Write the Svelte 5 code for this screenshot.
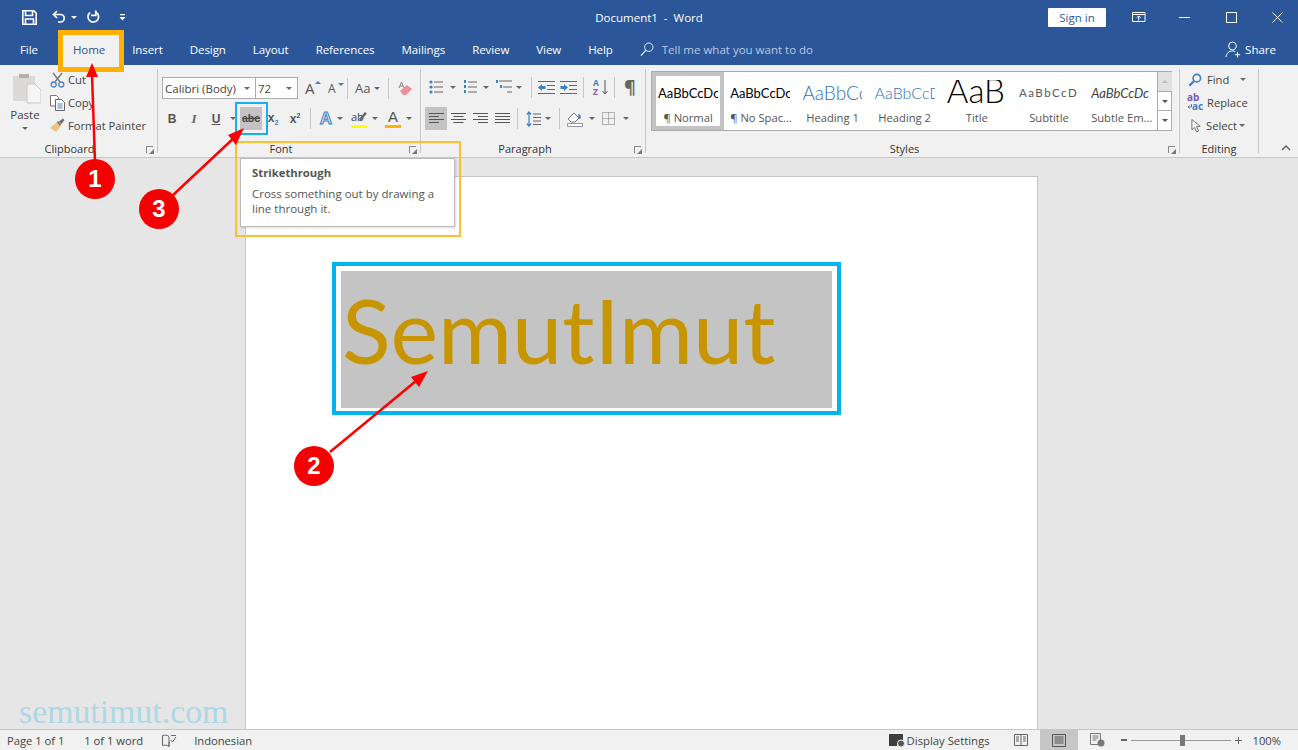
<script lang="ts">
  const tabs = ['Insert', 'Design', 'Layout', 'References', 'Mailings', 'Review', 'View', 'Help'];
  const styles = [
    { cls: 'st-normal', sample: 'AaBbCcDc', name: '¶ Normal', active: true },
    { cls: 'st-normal', sample: 'AaBbCcDc', name: '¶ No Spac...' },
    { cls: 'st-h1', sample: 'AaBbCc', name: 'Heading 1' },
    { cls: 'st-h2', sample: 'AaBbCcD', name: 'Heading 2' },
    { cls: 'st-title', sample: 'AaB', name: 'Title' },
    { cls: 'st-sub', sample: 'AaBbCcD', name: 'Subtitle' },
    { cls: 'st-em', sample: 'AaBbCcDc', name: 'Subtle Em...' }
  ];
  const markers = [
    { n: 1, x: 95, y: 179 },
    { n: 2, x: 314, y: 466 },
    { n: 3, x: 159, y: 209 }
  ];
</script>

<div class="word">
  <header class="titlebar">
    <div class="qat">
      <svg width="15" height="15" viewBox="0 0 15 15"><path d="M.8.8h11l2.400 2.400v11H.8z M3.500 1v4.500h7V1 M3.500 14V9h8v5" fill="none" stroke="#fff" stroke-width="1.600"/></svg>
      <svg class="undo" width="14" height="14" viewBox="0 0 14 14"><path d="M5 1 1.500 4.500 5 8M2 4.500h6.500a3.600 3.600 0 0 1 0 7.500H6" fill="none" stroke="#fff" stroke-width="1.700"/></svg>
      <span class="caret white"></span>
      <svg class="redo" width="14" height="14" viewBox="0 0 14 14"><path d="M9.500 1.900a5.300 5.300 0 1 1-5.400.6M9.800.5v4.800H5" fill="none" stroke="#fff" stroke-width="1.700"/></svg>
      <svg class="custom" width="7" height="8" viewBox="0 0 7 8"><path d="M1 1h5v1.200H1zM0.500 4h6L3.500 7.500z" fill="#fff"/></svg>
    </div>
    <div class="doc-title">Document1&nbsp; -&nbsp; Word</div>
    <div class="win">
      <button class="signin">Sign in</button>
      <svg class="w-disp" width="14" height="12" viewBox="0 0 14 12"><path d="M.5 1.500h12.500v9H.5zM.5 3.500H13M6.700 9.500V5M4.800 6.800l1.900-1.900 1.900 1.900" fill="none" stroke="#fff"/></svg>
      <svg class="w-min" width="11" height="11" viewBox="0 0 11 11"><path d="M0 5.500h11" stroke="#fff"/></svg>
      <svg class="w-max" width="11" height="11" viewBox="0 0 11 11"><path d="M.5.500h10v10H.5z" fill="none" stroke="#fff"/></svg>
      <svg class="w-close" width="11" height="11" viewBox="0 0 11 11"><path d="M.5.500l10 10M10.500.500l-10 10" stroke="#fff"/></svg>
    </div>
  </header>

  <nav class="tabs">
    <span class="tab file">File</span>
    <span class="tab home">Home</span>
    {#each tabs as t}
      <span class="tab">{t}</span>
    {/each}
    <svg class="search" width="14" height="15" viewBox="0 0 14 15"><circle cx="8.800" cy="5.200" r="4.200" fill="none" stroke="#e6ecf5"/><path d="M5.800 8.400 1 13.600" stroke="#e6ecf5" stroke-width="1.300"/></svg>
    <span class="tell">Tell me what you want to do</span>
    <svg class="share-ic" width="17" height="17" viewBox="0 0 17 17"><circle cx="7.500" cy="5" r="3.900" fill="none" stroke="#fff"/><path d="M1 16c.5-4 3-6 6.500-6 1 0 2 .2 2.800.6M12.500 11v5.500M9.800 13.700h5.400" fill="none" stroke="#fff"/></svg>
    <span class="share">Share</span>
  </nav>

  <section class="ribbon">
    <div class="group g-clip">
      <div class="body clip-body">
        <div class="paste">
          <svg width="32" height="31" viewBox="0 0 32 31">
            <path d="M4 3h22v25H4z" fill="#dcd9d9"/>
            <path d="M10 1h10v4H10z" fill="#b3b0b0"/>
            <path d="M18 11h8l6 6v13H18z" fill="#f6f4f4" stroke="#c9c6c6"/>
          </svg>
          <span class="paste-label">Paste</span>
          <span class="caret"></span>
        </div>
        <div class="clip-list">
          <div class="clip-row">
            <svg width="15" height="16" viewBox="0 0 15 16"><path d="M3 1l7 9M12 1 5 10" stroke="#7a7a7a" stroke-width="1.400"/><circle cx="3.700" cy="12.500" r="2.500" fill="none" stroke="#4a86c5" stroke-width="1.300"/><circle cx="11.300" cy="12.500" r="2.500" fill="none" stroke="#4a86c5" stroke-width="1.300"/></svg>
            <span>Cut</span>
          </div>
          <div class="clip-row">
            <svg width="15" height="16" viewBox="0 0 15 16"><path d="M.5.500h6l2 2V11h-8z" fill="#fff" stroke="#777"/><path d="M5.500 4.500h6l3 3v8h-9z" fill="#fff" stroke="#666"/><path d="M7.500 9h5M7.500 11h5M7.500 13h5" stroke="#4a7fb5"/></svg>
            <span>Copy</span>
          </div>
          <div class="clip-row">
            <svg width="15" height="15" viewBox="0 0 15 15"><path d="M0 10 7 4l4 4-5 6z" fill="#e8c48a"/><path d="M7 4l1-1 3 3-1 2zM9 3.500l4-3 1.500 1.500-3 4z" fill="#6f6f6f"/></svg>
            <span>Format Painter</span>
          </div>
        </div>
      </div>
      <div class="label lb-clip">Clipboard<i class="launch"></i></div>
    </div>

    <div class="group g-font">
      <div class="body font-body">
        <div class="row r1">
          <div class="select fname">Calibri (Body)<span class="caret"></span></div>
          <div class="select fsize">72<span class="caret"></span></div>
          <span class="gly grow">A<em class="up"></em></span>
          <span class="gly shrink">A<em class="down"></em></span>
          <b class="sep s1"></b>
          <span class="gly aa">Aa</span><span class="caret c-aa"></span>
          <b class="sep s2"></b>
          <svg class="eraser" width="15" height="15" viewBox="0 0 15 15"><path d="M2 10 9 4l5 4-6 6H5z" fill="#ef8f9c"/><path d="M1 7 3.500 1 6 7M2 5h3" fill="none" stroke="#888"/></svg>
        </div>
        <div class="row r2">
          <span class="fb b">B</span>
          <span class="fb i">I</span>
          <span class="fb u">U</span>
          <span class="caret c-u"></span>
          <span class="strike">abc</span>
          <span class="fb script">x<sub>2</sub></span>
          <span class="fb script sup">x<sup>2</sup></span>
          <b class="sep s3"></b>
          <span class="texteff">A</span><span class="caret"></span>
          <span class="hl">ab<i class="bar yellow"></i><svg class="pen" width="9" height="10" viewBox="0 0 9 10"><path d="M1 8 7 1l2 1.500L3 9.500z" fill="#666"/></svg></span><span class="caret c2"></span>
          <span class="fc">A<i class="bar orange"></i></span><span class="caret c3"></span>
        </div>
      </div>
      <div class="label lb-mid">Font<i class="launch"></i></div>
    </div>

    <div class="group g-para">
      <div class="body para-body">
        <div class="row pr1">
          <svg width="14" height="16" viewBox="0 0 14 16"><g fill="#3f7fc4"><circle cx="2" cy="3" r="1.600"/><circle cx="2" cy="8" r="1.600"/><circle cx="2" cy="13" r="1.600"/></g><path d="M5 3h9M5 8h9M5 13h9" stroke="#666"/></svg>
          <span class="caret m7"></span>
          <svg class="m7" width="14" height="16" viewBox="0 0 14 16"><g fill="#3f7fc4"><rect x="1" y="1" width="2" height="3"/><rect x="1" y="6" width="2" height="3"/><rect x="1" y="11" width="2" height="3"/></g><path d="M5 3h9M5 8h9M5 13h9" stroke="#666"/></svg>
          <span class="caret m6"></span>
          <svg class="m7" width="17" height="16" viewBox="0 0 17 16"><g fill="#3f7fc4"><rect x="0" y="1" width="2" height="3"/><rect x="4" y="6" width="2" height="3"/></g><path d="M3 2h13M7 8h9M11 13h5" stroke="#666"/></svg>
          <span class="caret m3"></span>
          <b class="sep m9"></b>
          <svg class="m6" width="17" height="13" viewBox="0 0 17 13"><path d="M0 .500h17M9 4.500h8M9 8.500h8M0 12.500h17" stroke="#666"/><path d="M0 6.500 4 3v2h3.500v3H4v2z" fill="#3f7fc4"/></svg>
          <svg class="m5" width="17" height="13" viewBox="0 0 17 13"><path d="M0 .500h17M9 4.500h8M9 8.500h8M0 12.500h17" stroke="#666"/><path d="M8 6.500 4 3v2H.500v3H4v2z" fill="#3f7fc4"/></svg>
          <b class="sep m6"></b>
          <span class="sort m9"><em>A</em><em class="z">Z</em><svg width="6" height="15" viewBox="0 0 6 15"><path d="M3 0v14M.5 11 3 14l2.500-3" fill="none" stroke="#555"/></svg></span>
          <b class="sep m6"></b>
          <span class="pil">¶</span>
        </div>
        <div class="row pr2">
          <span class="al on"><svg width="15" height="11" viewBox="0 0 15 11"><path d="M0 .500h15M0 3.500h10M0 6.500h15M0 9.500h10" stroke="#555"/></svg></span>
          <span class="al"><svg width="15" height="11" viewBox="0 0 15 11"><path d="M0 .500h15M2.500 3.500h10M0 6.500h15M2.500 9.500h10" stroke="#555"/></svg></span>
          <span class="al"><svg width="15" height="11" viewBox="0 0 15 11"><path d="M0 .500h15M5 3.500h10M0 6.500h15M5 9.500h10" stroke="#555"/></svg></span>
          <span class="al"><svg width="15" height="11" viewBox="0 0 15 11"><path d="M0 .500h15M0 3.500h15M0 6.500h15M0 9.500h15" stroke="#555"/></svg></span>
          <b class="sep m4"></b>
          <svg class="m8" width="15" height="16" viewBox="0 0 15 16"><path d="M3 1v14M.8 3.500 3 1l2.200 2.500M.8 12.500 3 15l2.200-2.500" fill="none" stroke="#3f7fc4" stroke-width="1.200"/><path d="M7 3h8M7 6.500h8M7 10h8M7 13.500h8" stroke="#666"/></svg>
          <span class="caret m4"></span>
          <b class="sep m8"></b>
          <svg class="m7" width="16" height="16" viewBox="0 0 16 16"><path d="M1 8 7 2l5 5-4 4H4z" fill="#fff" stroke="#777"/><path d="M11 3c2 0 3 2 3 4l-2 1z" fill="#3f7fc4"/><path d="M.500 12.500h15v3H.500z" fill="#fff" stroke="#999"/></svg>
          <span class="caret m6"></span>
          <svg class="m7" width="13" height="13" viewBox="0 0 13 13"><path d="M.5.500h12v12H.500zM6.500.500v12M.500 6.500h12" fill="none" stroke="#777" stroke-dasharray="1 1"/></svg>
          <span class="caret m8"></span>
        </div>
      </div>
      <div class="label lb-mid">Paragraph<i class="launch"></i></div>
    </div>

    <div class="group g-styles">
      <div class="body styles-body">
        <div class="gallery">
          {#each styles as s}
            <div class="style" class:active={s.active}>
              <div class="sample {s.cls}">{s.sample}</div>
              <div class="sname">{s.name}</div>
            </div>
          {/each}
          <div class="scroll">
            <span class="sb off"><i class="arrow-up"></i></span>
            <span class="sb"><i class="arrow-down"></i></span>
            <span class="sb more"><i class="arrow-down"></i></span>
          </div>
        </div>
      </div>
      <div class="label lb-mid">Styles<i class="launch"></i></div>
    </div>

    <div class="group g-edit">
      <div class="body edit-body">
        <div class="edit-row">
          <svg width="14" height="14" viewBox="0 0 15 15"><circle cx="9.500" cy="5.500" r="4" fill="none" stroke="#3f7fc4" stroke-width="1.800"/><path d="M6.500 8.500 1.500 13.500" stroke="#3f7fc4" stroke-width="2.400"/></svg>
          <span>Find</span><span class="caret c-find"></span>
        </div>
        <div class="edit-row r-rep">
          <span class="rep"><em>ab</em><em class="ac">ac</em><svg width="5" height="5" viewBox="0 0 5 5"><path d="M4.500 0v3H1M2.500 1.500 1 3l1.500 1.500" fill="none" stroke="#3f7fc4"/></svg></span>
          <span>Replace</span>
        </div>
        <div class="edit-row r-sel">
          <svg width="11" height="16" viewBox="0 0 12 16"><path d="M1 1v11l3-2.500 2.200 5 2-1-2.200-4.800 4-.5z" fill="#fff" stroke="#666"/></svg>
          <span>Select</span><span class="caret c-sel"></span>
        </div>
      </div>
      <div class="label">Editing</div>
    </div>

    <div class="collapse">
      <svg width="10" height="6" viewBox="0 0 10 6"><path d="M1 5 5 1l4 4" fill="none" stroke="#666" stroke-width="1.500"/></svg>
    </div>
  </section>

  <main class="canvas">
    <div class="page">
      <div class="sel-frame">
        <div class="selected">SemutImut</div>
      </div>
    </div>
    <div class="watermark">semutimut.com</div>
  </main>

  <footer class="status">
    <span class="s-page">Page 1 of 1</span>
    <span class="s-words">1 of 1 word</span>
    <svg class="s-proof" width="15" height="13" viewBox="0 0 15 13"><path d="M7 2.500C5.500 1 3 1 .500 1.500v10c2.500-.5 5-.5 6.500 1zM7 12.500V8M9 1.500h5" fill="none" stroke="#666"/><path d="M8.500 6l2 2 3.500-5" fill="none" stroke="#666"/></svg>
    <span class="s-lang">Indonesian</span>
    <div class="s-right">
      <svg width="17" height="15" viewBox="0 0 17 15"><path d="M0 1h14v9H8v3H0z" fill="#3f3f3f"/><circle cx="12" cy="10.500" r="3.500" fill="#555" stroke="#f1f1f1"/></svg>
      <span class="s-disp">Display Settings</span>
      <svg class="v-read" width="14" height="13" viewBox="0 0 14 13"><path d="M.5.500h13v11H.500zM7 .500v11M2 3h3M2 5h3M2 7h3M9 3h3M9 5h3M9 7h3" fill="none" stroke="#666"/></svg>
      <span class="v-print"><svg width="14" height="13" viewBox="0 0 14 13"><path d="M.5.500h13v12H.500zM2.500 3h9M2.500 5h9M2.500 7h9M2.500 9h9" fill="none" stroke="#555"/></svg></span>
      <svg class="v-web" width="15" height="14" viewBox="0 0 15 14"><path d="M.5.500h10v11H.500zM2.500 3h6M2.500 5h6M2.500 7h4" fill="none" stroke="#777"/><circle cx="11" cy="10" r="3.500" fill="#777"/></svg>
      <span class="z-minus"></span>
      <span class="z-track"><i class="z-thumb"></i></span>
      <span class="z-plus"></span>
      <span class="z-pct">100%</span>
    </div>
  </footer>

  <!-- annotations on top of the screenshot -->
  <div class="mark mark-home"></div>
  <div class="mark mark-strike"></div>
  <div class="mark mark-tip"></div>
  <div class="tooltip">
    <div class="tip-title">Strikethrough</div>
    <div class="tip-text">Cross something out by drawing a line through it.</div>
  </div>
  <svg class="arrows" width="1298" height="750" viewBox="0 0 1298 750">
    <g stroke="#f00" stroke-width="2.500" fill="#f00">
      <path d="M95 162 92 74" />
      <path d="M92 63 86 77h12z" stroke="none"/>
      <path d="M330 452 416 381"/>
      <path d="M428 371 411 377l8 10z" stroke="none"/>
      <path d="M172 196 236 136"/>
      <path d="M244 128 228 135l8 10z" stroke="none"/>
    </g>
  </svg>
  {#each markers as m}
    <div class="marker" style="left:{m.x - 20}px;top:{m.y - 20}px">{m.n}</div>
  {/each}
</div>

<style>
  :global(body) {
    margin: 0;
    background: #e6e6e6;
  }
  .word {
    position: relative;
    width: 1298px;
    height: 750px;
    overflow: hidden;
    display: flex;
    flex-direction: column;
    font-family: "Open Sans", "Noto Sans", sans-serif;
    font-size: 11.500px;
    color: #444;
  }
  svg {
    display: block;
    flex: none;
  }

  .titlebar {
    height: 34px;
    flex: none;
    background: #2b579a;
    display: flex;
    align-items: center;
    position: relative;
    color: #fff;
  }
  .qat {
    display: flex;
    align-items: center;
    padding-left: 22px;
  }
  .undo { margin-left: 15px; }
  .qat .caret { margin-left: 5px; }
  .redo { margin-left: 9px; }
  .custom { margin-left: 19px; }
  .doc-title {
    position: absolute;
    left: 0;
    right: 0;
    text-align: center;
    color: #fff;
  }
  .win {
    margin-left: auto;
    display: flex;
    align-items: center;
    padding-right: 15px;
  }
  .signin {
    width: 58px;
    height: 19px;
    border: 0;
    padding: 0;
    background: #fff;
    color: #2b579a;
    font: inherit;
    border-radius: 1px;
  }
  .w-disp { margin-left: 26px; }
  .w-min { margin-left: 33px; }
  .w-max { margin-left: 36px; }
  .w-close { margin-left: 35px; }

  .tabs {
    height: 31px;
    flex: none;
    background: #2b579a;
    display: flex;
    align-items: center;
    color: #fff;
    padding-left: 20px;
  }
  .tab { margin-right: 27px; letter-spacing: -0.07px; }
  .file { margin-right: 35px; }
  .home {
    color: #2b579a;
    background: #f1f1f1;
    align-self: stretch;
    line-height: 31px;
    padding: 0 14px;
    margin: 0 13px 0 -14px;
  }
  .tell { margin-left: 8px; color: #b9c8e0; }
  .share-ic { margin-left: auto; }
  .share { margin: 0 22px 0 3px; }

  .ribbon {
    height: 92px;
    flex: none;
    background: #f1f1f1;
    border-bottom: 1px solid #c6c6c6;
    display: flex;
    position: relative;
  }
  .group {
    display: flex;
    flex-direction: column;
    height: 84px;
    margin-top: 4px;
    border-right: 1px solid #c6c6c6;
    position: relative;
    flex: none;
    box-sizing: border-box;
  }
  .body { height: 71px; flex: none; box-sizing: border-box; }
  .label {
    height: 13px;
    line-height: 18px;
    text-align: center;
    font-size: 11px;
    color: #333;
  }
  .lb-clip { padding-right: 18px; }
  .lb-mid { padding-right: 16px; }
  .launch {
    position: absolute;
    right: 4px;
    bottom: 0;
    width: 7px;
    height: 7px;
    border-left: 1px solid #888;
    border-top: 1px solid #888;
    box-sizing: border-box;
  }
  .launch::after {
    content: "";
    position: absolute;
    right: -1px;
    bottom: -1px;
    border-left: 5px solid transparent;
    border-bottom: 5px solid #777;
  }

  .caret {
    display: inline-block;
    flex: none;
    width: 0;
    height: 0;
    border: 3px solid transparent;
    border-top: 3px solid #666;
    border-bottom: 0;
  }
  .caret.white { border-top-color: #fff; }

  .sep {
    display: block;
    flex: none;
    width: 1px;
    height: 21px;
    background: #c6c6c6;
  }
  .m3 { margin-left: 3px; }
  .m4 { margin-left: 4px; }
  .m5 { margin-left: 5px; }
  .m6 { margin-left: 6px; }
  .m7 { margin-left: 7px; }
  .m8 { margin-left: 8px; }
  .m9 { margin-left: 9px; }

  .g-clip { width: 158px; }
  .clip-body { display: flex; }
  .paste {
    width: 50px;
    display: flex;
    flex-direction: column;
    align-items: center;
    padding-top: 4px;
    box-sizing: border-box;
  }
  .paste-label { margin-top: 3px; line-height: 15px; }
  .paste .caret { margin-top: 5px; }
  .clip-list {
    display: flex;
    flex-direction: column;
    gap: 4px;
    padding-top: 1px;
  }
  .clip-row {
    display: flex;
    align-items: center;
    gap: 3px;
    height: 19px;
    white-space: nowrap;
    font-size: 11.200px;
  }

  .g-font { width: 263px; }
  .font-body {
    padding: 8px 0 0 4px;
  }
  .row {
    display: flex;
    align-items: center;
  }
  .r1 { height: 22px; }
  .r2 { height: 23px; margin-top: 8px; margin-left: -1px; }
  .select {
    height: 22px;
    box-sizing: border-box;
    border: 1px solid #ababab;
    background: #fff;
    display: flex;
    align-items: center;
    justify-content: space-between;
    padding: 0 5px 0 2px;
    flex: none;
  }
  .fname { width: 94px; }
  .fsize { width: 43px; margin-left: -1px; }
  .gly { position: relative; color: #555; flex: none; }
  .grow { font-size: 15px; margin-left: 7px; width: 17px; }
  .shrink { font-size: 12px; margin-left: 6px; width: 17px; }
  .up, .down {
    position: absolute;
    right: 1px;
    top: 3px;
    border: 3px solid transparent;
  }
  .up { border-bottom-color: #3f7fc4; border-top: 0; }
  .down { border-top-color: #3f7fc4; border-bottom: 0; }
  .s1 { margin-left: 2px; }
  .aa { font-size: 13px; margin-left: 7px; }
  .c-aa { margin-left: 4px; }
  .s2 { margin-left: 8px; }
  .eraser { margin-left: 9px; }

  .fb {
    font-family: "Liberation Sans", sans-serif;
    font-size: 12px;
    color: #555;
    flex: none;
    width: 22px;
    text-align: center;
  }
  .b { font-weight: 700; }
  .i { font-style: italic; font-family: "Liberation Serif", serif; font-size: 13px; font-weight: 700; color: #666; }
  .u { font-weight: 700; text-decoration: underline; }
  .c-u { margin-left: 3px; }
  .strike {
    width: 22px;
    height: 23px;
    flex: none;
    margin-left: 4px;
    background: #c3c3c3;
    color: #444;
    text-decoration: line-through;
    font-family: "Liberation Sans", sans-serif;
    font-size: 10.500px;
    font-weight: 700;
    text-align: center;
    line-height: 23px;
  }
  .script { font-weight: 700; }
  .script sub, .script sup {
    font-size: 7px;
    color: #3f7fc4;
  }
  .sup sup { color: #555; }
  .s3 { margin-left: 4px; }
  .texteff {
    font-family: "Liberation Sans", sans-serif;
    font-size: 17px;
    font-weight: 700;
    color: #dbe7f5;
    -webkit-text-stroke: 1px #3f7fc4;
    margin-left: 4px;
    width: 22px;
    text-align: center;
    flex: none;
  }
  .c2, .c3 { margin-left: 5px; }
  .hl, .fc {
    position: relative;
    width: 16px;
    height: 18px;
    margin-left: 8px;
    flex: none;
    line-height: 14px;
    font-size: 11px;
  }
  .pen { position: absolute; right: 0; top: 1px; }
  .fc {
    margin-left: 7px;
    font-family: "Liberation Sans", sans-serif;
    font-size: 15px;
    color: #555;
    text-align: center;
  }
  .bar {
    position: absolute;
    left: 0;
    right: 0;
    bottom: 0;
    height: 3px;
  }
  .yellow { background: #ffff00; }
  .orange { background: #ffb300; }

  .g-para { width: 225px; }
  .para-body { padding: 7px 0 0 4px; }
  .pr1 { height: 22px; margin-left: 4px; }
  .sort { display: flex; width: 15px; position: relative; flex: none; height: 17px; }
  .sort em {
    font-style: normal;
    font-weight: 700;
    font-size: 8.500px;
    color: #3f7fc4;
    line-height: 8px;
  }
  .sort .z {
    position: absolute;
    left: 0;
    top: 9px;
    color: #8a5cb0;
  }
  .sort svg { position: absolute; left: 9px; top: 1px; }
  .pil {
    font-size: 18px;
    color: #666;
    line-height: 20px;
    margin-left: 9px;
    font-weight: 700;
  }
  .pr2 { height: 23px; margin-top: 9px; }
  .al {
    width: 22px;
    height: 23px;
    display: flex;
    align-items: center;
    justify-content: center;
    flex: none;
  }
  .al.on { background: #c3c3c3; }

  .g-styles { width: 534px; }
  .styles-body { padding: 2px 0 0 5px; }
  .gallery {
    width: 521px;
    height: 60px;
    border: 1px solid #ababab;
    background: #fff;
    box-sizing: border-box;
    display: flex;
    position: relative;
  }
  .style {
    width: 72.200px;
    height: 58px;
    flex: none;
    box-sizing: border-box;
    overflow: hidden;
    padding: 8px 6px 0;
  }
  .style.active {
    border: 4px solid #c3c3c3;
    padding: 4px 2px 0;
  }
  .sample {
    height: 26px;
    line-height: 26px;
    white-space: nowrap;
    overflow: hidden;
    width: 60px;
    font-family: Lato, "Liberation Sans", sans-serif;
  }
  .sname {
    margin-top: 4px;
    line-height: 15px;
    font-size: 11.200px;
    color: #555;
    white-space: nowrap;
    text-align: center;
  }
  .st-normal { font-size: 13px; color: #000; }
  .st-h1 { font-size: 19px; color: #2e74b5; font-weight: 300; }
  .st-h2 { font-size: 16px; color: #2e74b5; font-weight: 300; }
  .st-title { font-size: 33px; color: #000; font-weight: 300; line-height: 21px; }
  .st-sub { font-size: 11.500px; color: #595959; letter-spacing: 1.500px; }
  .st-em { font-size: 13px; font-style: italic; color: #404040; }
  .scroll {
    margin-left: auto;
    width: 15px;
    box-sizing: border-box;
    border-left: 1px solid #ababab;
    display: flex;
    flex-direction: column;
    height: 58px;
    flex: none;
  }
  .sb {
    flex: 1;
    display: flex;
    align-items: center;
    justify-content: center;
    border-bottom: 1px solid #ababab;
  }
  .sb:last-child { border-bottom: 0; }
  .sb.off { background: #e1e1e1; }
  .sb i { display: block; border: 3px solid transparent; }
  .arrow-up { border-bottom-color: #bbb !important; border-top: 0 !important; }
  .arrow-down { border-top-color: #555 !important; border-bottom: 0 !important; }
  .more i { box-shadow: 0 -3px 0 -2px #555; }

  .g-edit { width: 79px; }
  .edit-body {
    padding: 1px 0 0 8px;
    display: flex;
    flex-direction: column;
    gap: 4px;
  }
  .edit-row {
    display: flex;
    align-items: center;
    height: 19px;
    gap: 5px;
    font-size: 11.200px;
  }
  .c-find { margin-left: 6px; }
  .c-sel { margin-left: -2px; }
  .r-rep { margin-left: -1px; gap: 4px; }
  .r-sel { margin-left: 3px; gap: 4px; }
  .rep {
    width: 16px;
    position: relative;
    height: 17px;
    flex: none;
  }
  .rep em {
    position: absolute;
    left: 0;
    top: -2px;
    font-style: normal;
    font-size: 10px;
    font-weight: 700;
    color: #7a5ca8;
    line-height: 11px;
  }
  .rep .ac { top: 7px; left: 5px; color: #3f7fc4; }
  .rep svg { position: absolute; left: 0; top: 10px; }
  .collapse {
    position: absolute;
    right: 7px;
    bottom: 6px;
  }

  .canvas {
    flex: 1;
    min-height: 0;
    background: #e6e6e6;
    padding: 18px 0 0 245px;
    position: relative;
    overflow: hidden;
  }
  .page {
    width: 793px;
    height: 600px;
    background: #fff;
    box-sizing: border-box;
    border: 1px solid #c6c6c6;
    padding: 85px 0 0 86px;
  }
  .sel-frame {
    width: 509px;
    height: 153px;
    box-sizing: border-box;
    border: 4px solid #00b4f0;
    padding: 5px 5px 3px;
  }
  .selected {
    height: 100%;
    background: #c4c4c4;
    color: #c79500;
    font-family: Lato, "Open Sans", sans-serif;
    font-size: 90px;
    line-height: 116px;
    padding-left: 1px;
  }
  .watermark {
    position: absolute;
    left: 19px;
    bottom: 0;
    font-family: "Liberation Serif", serif;
    font-size: 33.800px;
    line-height: 34px;
    color: #add8e6;
  }

  .status {
    height: 21px;
    flex: none;
    background: #f1f1f1;
    border-top: 1px solid #c6c6c6;
    box-sizing: border-box;
    display: flex;
    align-items: center;
    font-size: 11.200px;
    color: #444;
    padding-left: 7px;
  }
  .s-words { margin-left: 20px; }
  .s-proof { margin-left: 19px; }
  .s-lang { margin-left: 17px; }
  .s-right {
    margin-left: auto;
    display: flex;
    align-items: center;
    height: 100%;
  }
  .s-disp { margin-left: 1px; font-size: 11.300px; }
  .v-read { margin-left: 24px; }
  .v-print {
    width: 38px;
    height: 100%;
    background: #c6c6c6;
    display: flex;
    align-items: center;
    justify-content: center;
    margin-left: 12px;
  }
  .v-web { margin-left: 12px; }
  .z-minus { width: 6px; height: 2px; background: #666; margin-left: 16px; }
  .z-track {
    width: 100px;
    height: 1px;
    background: #999;
    position: relative;
    margin-left: 4px;
  }
  .z-thumb {
    position: absolute;
    left: 49px;
    top: -5px;
    width: 5px;
    height: 11px;
    background: #777;
  }
  .z-plus {
    width: 7px;
    height: 7px;
    margin-left: 4px;
    background: linear-gradient(#666, #666) center / 7px 1px no-repeat, linear-gradient(#666, #666) center / 1px 7px no-repeat;
  }
  .z-pct { margin: 0 17px 0 11px; }

  .mark {
    position: absolute;
    box-sizing: border-box;
  }
  .mark-home {
    left: 58px;
    top: 30px;
    width: 66px;
    height: 42px;
    border: 5px solid #ffb000;
  }
  .mark-strike {
    left: 235px;
    top: 102px;
    width: 33px;
    height: 33px;
    border: 2px solid #16b1ec;
  }
  .mark-tip {
    left: 235px;
    top: 141px;
    width: 226px;
    height: 96px;
    border: 2px solid #ffc02e;
  }
  .tooltip {
    position: absolute;
    left: 240px;
    top: 158px;
    width: 215px;
    height: 69px;
    box-sizing: border-box;
    background: #fff;
    border: 1px solid #bcbcbc;
    box-shadow: 1px 1px 2px rgba(0, 0, 0, 0.15);
    padding: 6px 11px;
    font-size: 11.500px;
    line-height: 15px;
    color: #555;
  }
  .tip-title { font-weight: 700; font-size: 11.300px; margin-bottom: 6px; }
  .arrows {
    position: absolute;
    left: 0;
    top: 0;
    pointer-events: none;
  }
  .marker {
    position: absolute;
    width: 40px;
    height: 40px;
    border-radius: 50%;
    background: #f40000;
    color: #fff;
    font-family: "Liberation Sans", sans-serif;
    font-size: 24px;
    font-weight: 700;
    line-height: 40px;
    text-align: center;
  }
</style>
